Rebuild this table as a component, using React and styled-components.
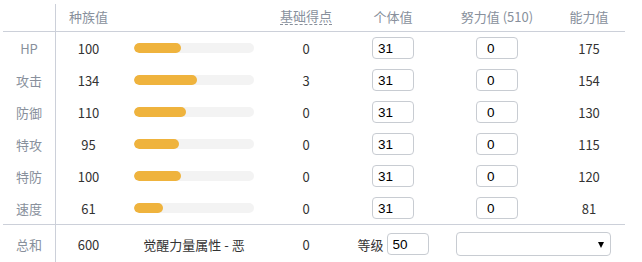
import React from 'react'
import styled, { createGlobalStyle } from 'styled-components';

const stats = [
  { name: 'HP', base: 100, ep: 0, value: 175 },
  { name: '攻击', base: 134, ep: 3, value: 154 },
  { name: '防御', base: 110, ep: 0, value: 130 },
  { name: '特攻', base: 95, ep: 0, value: 115 },
  { name: '特防', base: 100, ep: 0, value: 120 },
  { name: '速度', base: 61, ep: 0, value: 81 },
];

function App() {
  return (
    <>
      <Global />
      <Table>
        <HeadRow>
          <LabelCell />
          <HeadCell>种族值</HeadCell>
          <HeadCell />
          <HeadCell><Dashed>基础得点</Dashed></HeadCell>
          <HeadCell>个体值</HeadCell>
          <HeadCell>努力值 (510)</HeadCell>
          <HeadCell>能力值</HeadCell>
        </HeadRow>
        {stats.map((s) => (
          <Row key={s.name}>
            <LabelCell>{s.name}</LabelCell>
            <Cell>{s.base}</Cell>
            <Cell>
              <Track>
                <Fill style={{ width: `${(s.base / 255) * 100}%` }} />
              </Track>
            </Cell>
            <Cell>{s.ep}</Cell>
            <Cell><Input defaultValue="31" /></Cell>
            <Cell><Input $pad={10} defaultValue="0" /></Cell>
            <Cell>{s.value}</Cell>
          </Row>
        ))}
        <TotalRow>
          <LabelCell>总和</LabelCell>
          <Cell>600</Cell>
          <Cell>觉醒力量属性 - 恶</Cell>
          <Cell>0</Cell>
          <Cell>
            <Level>等级</Level>
            <Input defaultValue="50" />
          </Cell>
          <WideCell>
            <SelectBox>
              <Select defaultValue="">
                <option value=""></option>
              </Select>
              <Arrow />
            </SelectBox>
          </WideCell>
        </TotalRow>
      </Table>
    </>
  )
}

const Global = createGlobalStyle`
  body {
    margin: 0;
    background: #fff;
    font-family: "Noto Sans CJK SC", "Noto Sans", sans-serif;
    font-size: 13px;
    color: #333;
  }
`;

const Table = styled.div`
  width: 622px;
  margin: 4px 0 0 3px;
`;

const Row = styled.div`
  display: grid;
  grid-template-columns: 53px 65px 146px 78px 96px 112px 72px;
  height: 32px;
  align-items: stretch;
`;

const HeadRow = styled(Row)`
  height: 27px;
  border-bottom: 1px solid #ccd0d9;
  color: #88909c;
`;

const TotalRow = styled(Row)`
  height: 38px;
  border-top: 1px solid #ccd0d9;
`;

const Cell = styled.div`
  display: flex;
  align-items: center;
  justify-content: center;
  line-height: 1;
`;

const HeadCell = styled(Cell)`
  padding-bottom: 2px;
`;

const WideCell = styled(Cell)`
  grid-column: span 2;
`;

const LabelCell = styled(Cell)`
  border-right: 1px solid #ccd0d9;
  color: #88909c;
`;

const Dashed = styled.span`
  border-bottom: 1px dashed #88909c;
  padding-bottom: 2px;
`;

const Track = styled.div`
  width: 120px;
  height: 10px;
  border-radius: 5px;
  background: #f3f3f3;
  overflow: hidden;
`;

const Fill = styled.div`
  height: 100%;
  border-radius: 5px;
  background: #efb33d;
`;

const Input = styled.input`
  box-sizing: border-box;
  width: 42px;
  height: 22px;
  border: 1px solid #c8ccd2;
  border-radius: 4px;
  padding: 0 0 0 ${(p) => p.$pad || 5}px;
  font-family: "Liberation Sans", Arial, sans-serif;
  font-size: 13.5px;
  color: #000;
  outline: none;
`;

const Level = styled.span`
  margin-right: 3px;
  color: #333;
`;

const SelectBox = styled.div`
  position: relative;
  width: 155px;
  height: 24px;
`;

const Select = styled.select`
  box-sizing: border-box;
  width: 100%;
  height: 100%;
  appearance: none;
  border: 1px solid #c8ccd2;
  border-radius: 4px;
  background: #fff;
`;

const Arrow = styled.span`
  position: absolute;
  right: 7px;
  top: 10px;
  width: 0;
  height: 0;
  border-left: 3.5px solid transparent;
  border-right: 3.5px solid transparent;
  border-top: 6px solid #000;
  pointer-events: none;
`;

export default App
